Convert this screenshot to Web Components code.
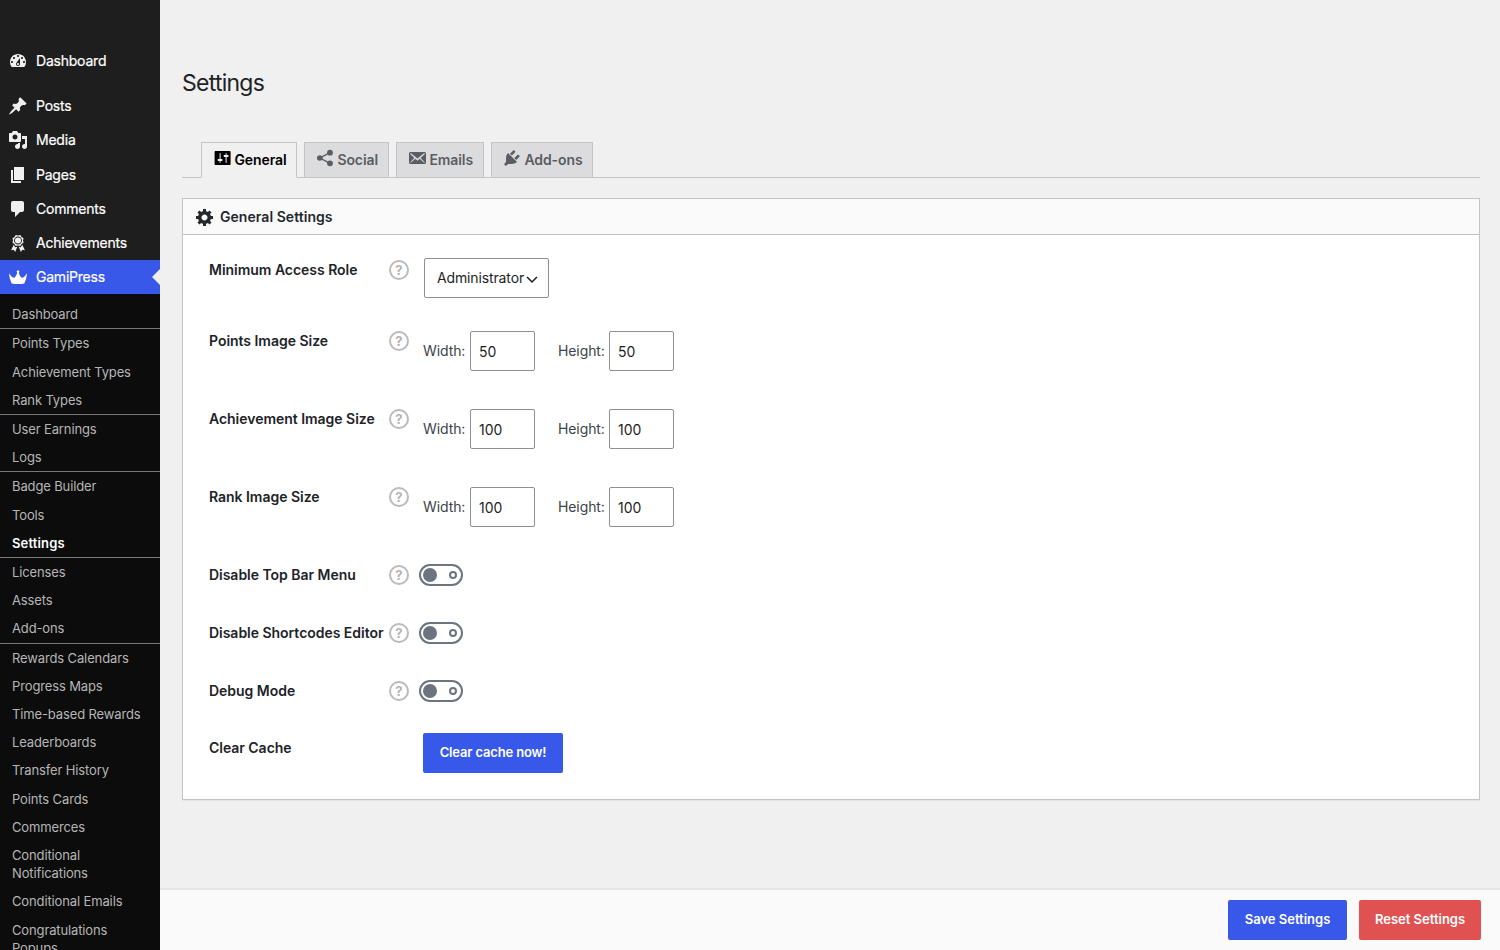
<!DOCTYPE html>
<html lang="en">
<head>
<meta charset="utf-8">
<title>Settings</title>
<style>
  html, body { margin: 0; height: 100%; }
  body {
    background: #f0f0f0;
    color: #3c434a;
    font-family: Inter, "Liberation Sans", sans-serif;
    font-size: 14px;
    line-height: 1.3;
    overflow: hidden;
  }
</style>
</head>
<body>
<settings-app></settings-app>

<script>
const ICONS = {
  dashboard: '<path fill-rule="evenodd" d="M3.76 16h12.48c1.1-1.37 1.76-3.11 1.76-5 0-4.42-3.58-8-8-8s-8 3.58-8 8c0 1.89.66 3.63 1.76 5zM10 4c.55 0 1 .45 1 1s-.45 1-1 1-1-.45-1-1 .45-1 1-1zM6 6c.55 0 1 .45 1 1s-.45 1-1 1-1-.45-1-1 .45-1 1-1zm8 0c.55 0 1 .45 1 1s-.45 1-1 1-1-.45-1-1 .45-1 1-1zm-5.37 5.55L12 7v6c0 1.1-.9 2-2 2s-2-.9-2-2c0-.57.24-1.08.63-1.45zM4 10c.55 0 1 .45 1 1s-.45 1-1 1-1-.45-1-1 .45-1 1-1zm12 0c.55 0 1 .45 1 1s-.45 1-1 1-1-.45-1-1 .45-1 1-1zm-5 3c0-.55-.45-1-1-1s-1 .45-1 1 .45 1 1 1 1-.45 1-1z"/>',
  pin: '<path d="M10.44 3.02l1.82-1.82 6.36 6.35-1.83 1.82c-1.05-.68-2.48-.57-3.41.36l-.75.75c-.92.93-1.04 2.35-.35 3.41l-1.83 1.82-2.41-2.41-2.8 2.79c-.42.42-3.38 2.71-3.8 2.29s1.86-3.39 2.28-3.81l2.79-2.79L4.1 9.36l1.83-1.82c1.05.69 2.48.57 3.4-.36l.75-.75c.93-.92 1.05-2.35.36-3.41z"/>',
  media: '<path fill-rule="evenodd" d="M13 11V4c0-.55-.45-1-1-1h-1.67L9 1H5L3.67 3H2c-.55 0-1 .45-1 1v7c0 .55.45 1 1 1h10c.55 0 1-.45 1-1zM7 4.5c1.38 0 2.5 1.12 2.5 2.5S8.38 9.5 7 9.5 4.5 8.38 4.5 7 5.62 4.5 7 4.5zM14 6h5v10.5c0 1.38-1.12 2.5-2.5 2.5S14 17.88 14 16.5s1.12-2.5 2.5-2.5c.17 0 .34.02.5.05V9h-3V6zm-4 8.05V13h2v3.5c0 1.38-1.12 2.5-2.5 2.5S7 17.88 7 16.5 8.12 14 9.5 14c.17 0 .34.02.5.05z"/>',
  pages: '<path d="M6 15V2h10v13H6zm-1 1h8v2H3V5h2v11z"/>',
  comments: '<path d="M5 2h9c1.1 0 2 .9 2 2v7c0 1.1-.9 2-2 2h-2l-5 5v-5H5c-1.1 0-2-.9-2-2V4c0-1.1.9-2 2-2z"/>',
  award: '<path fill-rule="evenodd" d="M4.46 5.16L5 7.46l-.54 2.29 2.01 1.24L7.7 13l2.3-.54 2.3.54 1.23-2.01 2.01-1.24L15 7.46l.54-2.3-2-1.24-1.24-2.01-2.3.55-2.29-.54-1.25 2zm5.55 6.34c-2.21-.02-3.99-1.81-3.99-4.02 0-2.2 1.78-3.99 3.99-3.99 2.2 0 3.99 1.79 3.99 3.99 0 2.22-1.78 4.02-3.99 4.02z"/><circle cx="10" cy="7.47" r="3.06"/><path d="M5.7 11.8L3.1 17.2l2.6-.5 1.4 2.3 2.2-5.2-2.1.5zM14.3 11.8l2.6 5.4-2.6-.5-1.4 2.3-2.2-5.2 2.1.5z"/>',
  crown: '<path d="M1 6.300c1.300 2.200 3 3.900 5.200 4.700C7.800 9.700 8.700 8 9.200 5.600A1.300 1.300 0 1 1 10.800 5.600C11.300 8 12.200 9.700 13.800 11 16 10.200 17.700 8.500 19 6.300c-.2 3.500-1 6.700-2.700 10.100-4.200.8-8.400.8-12.600 0C2 13 1.200 9.800 1 6.300z"/>',
  sliders: '<path transform="translate(.6 0)" fill-rule="evenodd" d="M18 16V4c0-.55-.45-1-1-1H3c-.55 0-1 .45-1 1v12c0 .55.45 1 1 1h14c.55 0 1-.45 1-1zM8 11h1c.55 0 1 .45 1 1s-.45 1-1 1H8v1.5c0 .28-.22.5-.5.5s-.5-.22-.5-.5V13H6c-.55 0-1-.45-1-1s.45-1 1-1h1V5.500c0-.28.22-.5.5-.5s.5.22.5.5V11zm5-2h-1c-.55 0-1-.45-1-1s.45-1 1-1h1V5.500c0-.28.22-.5.5-.5s.5.22.5.5V7h1c.55 0 1 .45 1 1s-.45 1-1 1h-1v5.500c0 .28-.22.5-.5.5s-.5-.22-.5-.5V9z"/>',
  share: '<path d="M15 4.600L5 10l10 5.400" fill="none" stroke="currentColor" stroke-width="1.400"/><circle cx="15" cy="4.700" r="2.900"/><circle cx="4.800" cy="10" r="2.800"/><circle cx="15" cy="15.300" r="2.900"/>',
  email: '<path fill-rule="evenodd" d="M19 14.500v-9c0-.83-.67-1.500-1.500-1.500H3.490c-.83 0-1.500.67-1.500 1.500v9c0 .83.67 1.500 1.500 1.500H17.500c.83 0 1.500-.67 1.500-1.500zm-1.310-9.110c.33.33.15.67-.03.84L13.600 9.950l3.900 4.060c.12.14.2.36.06.51-.13.16-.43.15-.56.05l-4.370-3.730-2.140 1.950-2.130-1.950-4.370 3.730c-.13.1-.43.11-.56-.05-.14-.15-.06-.37.06-.51l3.900-4.060-4.060-3.720c-.18-.17-.36-.51-.03-.84s.67-.17.95.07l6.240 5.040 6.250-5.040c.28-.24.62-.4.95-.07z"/>',
  plug: '<path d="M13.110 4.360L9.870 7.600 8 5.730l3.240-3.240c.35-.34 1.050-.2 1.560.32.52.51.66 1.210.31 1.550zm-8 1.770l.91-1.120 9.010 9.010-1.190.84c-.71.71-2.630 1.160-3.820 1.160H6.140L4.900 17.260c-.59.59-1.540.59-2.120 0-.59-.58-.59-1.530 0-2.120l1.240-1.240v-3.880c0-1.130.4-3.190 1.090-3.890zm7.260 3.970l3.240-3.240c.34-.35 1.040-.21 1.550.31.52.51.66 1.210.31 1.550l-3.240 3.250z"/>',
  gear: '<path fill-rule="evenodd" d="M18 12h-2.180c-.17.7-.44 1.350-.81 1.930l1.540 1.540-2.100 2.100-1.540-1.540c-.58.36-1.230.63-1.910.79V19H8v-2.180c-.68-.16-1.330-.43-1.910-.79l-1.540 1.540-2.120-2.120 1.540-1.540c-.36-.58-.63-1.230-.79-1.910H1V9.030h2.170c.16-.7.44-1.350.8-1.940L2.430 5.550l2.100-2.100 1.540 1.540c.58-.37 1.240-.64 1.930-.81V2h3v2.180c.68.16 1.330.43 1.910.79l1.540-1.540 2.120 2.120-1.540 1.540c.36.59.64 1.240.8 1.940H18V12zm-8.500 1.500c1.660 0 3-1.340 3-3s-1.340-3-3-3-3 1.340-3 3 1.340 3 3 3z"/>',
  chevron: '<path d="M3.800 7.500l6.200 6.200 6.200-6.200" fill="none" stroke="currentColor" stroke-width="1.900"/>',
};

class DashIcon extends HTMLElement {
  connectedCallback() {
    if (!this.shadowRoot) this.attachShadow({ mode: 'open' });
    this.shadowRoot.innerHTML = `
      <style>
        :host { display: block; flex: none; width: 20px; height: 20px; }
        svg { display: block; width: 100%; height: 100%; fill: currentColor; }
      </style>
      <svg viewBox="0 0 20 20" aria-hidden="true">${ICONS[this.getAttribute('name')] || ''}</svg>
    `;
  }
}

class MenuItem extends HTMLElement {
  connectedCallback() {
    this.attachShadow({ mode: 'open' }).innerHTML = `
      <style>
        :host { display: block; color: #fff; letter-spacing: -0.22px; -webkit-text-stroke: 0.2px; }
        :host([gap]) { margin-bottom: 11px; }
        .item { position: relative; display: flex; align-items: center; height: 34.2px; }
        dash-icon { margin: 0 8px; color: #f0f0f1; }
        :host([current]) .item { background: #3858e9; }
        :host([current]) dash-icon { color: #fff; }
        :host([current]) .item::after {
          content: ""; position: absolute; right: 0; top: 50%; margin-top: -8px;
          border: 8px solid transparent; border-right-color: #f0f0f0; border-left: 0;
        }
      </style>
      <div class="item"><dash-icon name="${this.getAttribute('icon')}"></dash-icon><slot></slot></div>
    `;
  }
}

class SubItem extends HTMLElement {
  connectedCallback() {
    this.attachShadow({ mode: 'open' }).innerHTML = `
      <style>
        :host {
          display: block; padding: 5px 12px;
          font-size: 13px; line-height: 18.2px; color: #b6b6b6;
          letter-spacing: -0.13px;
        }
        :host([divider]) { border-bottom: 1px solid #797979; }
        :host([current]) { color: #fff; font-weight: 600; letter-spacing: 0.15px; }
      </style>
      <slot></slot>
    `;
  }
}

class AdminMenu extends HTMLElement {
  connectedCallback() {
    this.attachShadow({ mode: 'open' }).innerHTML = `
      <style>
        :host { display: block; width: 160px; height: 100%; box-sizing: border-box; padding-top: 44px; background: #1e1e1e; overflow: hidden; }
        .sub { padding: 5.88px 0 8px; background: #0c0c0c; }
      </style>
      <menu-item icon="dashboard" gap>Dashboard</menu-item>
      <menu-item icon="pin">Posts</menu-item>
      <menu-item icon="media">Media</menu-item>
      <menu-item icon="pages">Pages</menu-item>
      <menu-item icon="comments">Comments</menu-item>
      <menu-item icon="award">Achievements</menu-item>
      <menu-item icon="crown" current>GamiPress</menu-item>
      <div class="sub">
        <sub-item divider>Dashboard</sub-item>
        <sub-item>Points Types</sub-item>
        <sub-item>Achievement Types</sub-item>
        <sub-item divider>Rank Types</sub-item>
        <sub-item>User Earnings</sub-item>
        <sub-item divider>Logs</sub-item>
        <sub-item>Badge Builder</sub-item>
        <sub-item>Tools</sub-item>
        <sub-item current divider>Settings</sub-item>
        <sub-item>Licenses</sub-item>
        <sub-item>Assets</sub-item>
        <sub-item divider>Add-ons</sub-item>
        <sub-item>Rewards Calendars</sub-item>
        <sub-item>Progress Maps</sub-item>
        <sub-item>Time-based Rewards</sub-item>
        <sub-item>Leaderboards</sub-item>
        <sub-item>Transfer History</sub-item>
        <sub-item>Points Cards</sub-item>
        <sub-item>Commerces</sub-item>
        <sub-item>Conditional Notifications</sub-item>
        <sub-item>Conditional Emails</sub-item>
        <sub-item>Congratulations Popups</sub-item>
      </div>
    `;
  }
}

class NavTab extends HTMLElement {
  connectedCallback() {
    this.attachShadow({ mode: 'open' }).innerHTML = `
      <style>
        :host {
          display: flex; box-sizing: border-box; height: 36px; padding: 0 0 0 10.4px;
          border: 1px solid #c3c4c7; background: #dcdcde; color: #5a5d62;
          font-size: 14px; font-weight: 600; line-height: 34px; letter-spacing: -0.08px; white-space: nowrap;
        }
        :host([active]) { background: #f0f0f0; border-bottom-color: #f0f0f0; color: #000; }
        dash-icon { margin: 5px 2px 0 0; }
      </style>
      <dash-icon name="${this.getAttribute('icon')}"></dash-icon><slot></slot>
    `;
  }
}

class TabBar extends HTMLElement {
  connectedCallback() {
    this.attachShadow({ mode: 'open' }).innerHTML = `
      <style>
        :host { display: flex; gap: 7px; height: 35px; padding-left: 19px; border-bottom: 1px solid #c3c4c7; }
      </style>
      <slot></slot>
    `;
  }
}

class SettingsPanel extends HTMLElement {
  connectedCallback() {
    this.attachShadow({ mode: 'open' }).innerHTML = `
      <style>
        :host { display: block; border: 1px solid #c3c4c7; background: #fff; box-shadow: 0 1px 1px rgba(0, 0, 0, .04); }
        header {
          display: flex; align-items: center; gap: 5px; height: 35px; padding-left: 12px;
          border-bottom: 1px solid #c3c4c7; background: #fafafa; color: #23282d; font-weight: 600;
          letter-spacing: 0.05px;
        }
        header span { padding-top: 1px; }
      </style>
      <header><dash-icon name="gear"></dash-icon><span>${this.getAttribute('heading')}</span></header>
      <slot></slot>
    `;
  }
}

class HelpTip extends HTMLElement {
  connectedCallback() {
    this.attachShadow({ mode: 'open' }).innerHTML = `
      <style>
        :host {
          display: flex; align-items: center; justify-content: center;
          box-sizing: border-box; width: 20px; height: 20px;
          border: 2px solid #bbb; border-radius: 50%;
          color: #b4b4b4; font-size: 13px; font-weight: 700; line-height: 16px;
        }
      </style>
      <span>?</span>
    `;
  }
}

class SettingRow extends HTMLElement {
  connectedCallback() {
    this.attachShadow({ mode: 'open' }).innerHTML = `
      <style>
        :host { display: flex; box-sizing: border-box; padding-left: 26px; }
        .label {
          width: 180px; padding-top: 25px; line-height: 20px; color: #1d2327;
          font-weight: 600; letter-spacing: -0.03px; white-space: nowrap;
        }
        .tip { width: 34px; padding-top: 25px; }
      </style>
      <div class="label">${this.getAttribute('label')}</div>
      <div class="tip">${this.hasAttribute('help') ? '<help-tip></help-tip>' : ''}</div>
      <slot></slot>
    `;
  }
}

class RoleSelect extends HTMLElement {
  connectedCallback() {
    this.attachShadow({ mode: 'open' }).innerHTML = `
      <style>
        :host {
          display: flex; align-items: center; box-sizing: border-box;
          width: 125px; height: 40px; margin: 23px 0 0 1px; padding-left: 12px;
          border: 1px solid #8c8f94; border-radius: 2px; background: #fff; color: #1e1e1e;
        }
        span { width: 87px; letter-spacing: -0.13px; white-space: nowrap; }
        dash-icon { width: 16px; height: 16px; margin-top: 2px; }
      </style>
      <span><slot></slot></span><dash-icon name="chevron"></dash-icon>
    `;
  }
}

class SizeField extends HTMLElement {
  connectedCallback() {
    const value = this.getAttribute('value');
    this.attachShadow({ mode: 'open' }).innerHTML = `
      <style>
        :host { display: flex; gap: 23px; margin-top: 25px; line-height: 40px; }
        label { display: flex; }
        .name { width: 47px; letter-spacing: -0.1px; }
        .wide .name { width: 51px; }
        .box {
          box-sizing: border-box; width: 65px; height: 40px; padding: 0 8px;
          border: 1px solid #8c8f94; border-radius: 2px; background: #fff; color: #1e1e1e;
        }
      </style>
      <label><span class="name">Width:</span><span class="box">${value}</span></label>
      <label class="wide"><span class="name">Height:</span><span class="box">${value}</span></label>
    `;
  }
}

class ToggleSwitch extends HTMLElement {
  connectedCallback() {
    this.attachShadow({ mode: 'open' }).innerHTML = `
      <style>
        :host {
          display: flex; align-items: center; justify-content: space-between;
          box-sizing: border-box; width: 44px; height: 22px; margin: 24px 0 0 -4px; padding: 0 4px 0 2px;
          border: 2px solid #6c7480; border-radius: 11px;
        }
        .knob { width: 14px; height: 14px; border-radius: 50%; background: #6c7480; }
        .ring { box-sizing: border-box; width: 8px; height: 8px; border: 2px solid #6c7480; border-radius: 50%; }
      </style>
      <span class="knob"></span><span class="ring"></span>
    `;
  }
}

class ActionButton extends HTMLElement {
  connectedCallback() {
    this.attachShadow({ mode: 'open' }).innerHTML = `
      <style>
        :host { display: block; height: 40px; }
        button {
          display: block; width: 100%; height: 40px; padding: 0 0 1px; border: 0; border-radius: 2px;
          background: #3858e9; color: #fff; font: 600 13px/39px Inter, "Liberation Sans", sans-serif;
          letter-spacing: var(--button-spacing, 0); white-space: nowrap;
        }
        :host([danger]) button { background: #e05252; }
      </style>
      <button type="button"><slot></slot></button>
    `;
  }
}

class SettingsApp extends HTMLElement {
  connectedCallback() {
    this.attachShadow({ mode: 'open' }).innerHTML = `
      <style>
        :host { display: flex; height: 100vh; }
        .page { flex: 1; min-width: 0; display: flex; flex-direction: column; }
        main { flex: 1; padding: 68px 20px 0 22px; }
        h1 { margin: 0 0 44px; color: #1d2327; font-size: 23px; font-weight: 400; line-height: 30px; letter-spacing: -0.75px; }
        settings-panel { margin-top: 20px; }
        footer {
          box-sizing: border-box; height: 62px; padding: 10px 19px 0 0;
          display: flex; justify-content: flex-end; gap: 12px;
          border-top: 2px solid #e6e6e6; background: #fafafa;
        }
      </style>
      <admin-menu></admin-menu>
      <div class="page">
        <main>
          <h1>Settings</h1>
          <tab-bar>
            <nav-tab icon="sliders" active style="width:96px">General</nav-tab>
            <nav-tab icon="share" style="width:85px">Social</nav-tab>
            <nav-tab icon="email" style="width:88px">Emails</nav-tab>
            <nav-tab icon="plug" style="width:102px">Add-ons</nav-tab>
          </tab-bar>
          <settings-panel heading="General Settings">
            <setting-row label="Minimum Access Role" help style="height:71px"><role-select>Administrator</role-select></setting-row>
            <setting-row label="Points Image Size" help style="height:78px"><size-field value="50"></size-field></setting-row>
            <setting-row label="Achievement Image Size" help style="height:78px"><size-field value="100"></size-field></setting-row>
            <setting-row label="Rank Image Size" help style="height:78px"><size-field value="100"></size-field></setting-row>
            <setting-row label="Disable Top Bar Menu" help style="height:58px"><toggle-switch></toggle-switch></setting-row>
            <setting-row label="Disable Shortcodes Editor" help style="height:58px"><toggle-switch></toggle-switch></setting-row>
            <setting-row label="Debug Mode" help style="height:57px"><toggle-switch></toggle-switch></setting-row>
            <setting-row label="Clear Cache" style="height:86px"><action-button style="width:140px;margin-top:20px;--button-spacing:-0.15px">Clear cache now!</action-button></setting-row>
          </settings-panel>
        </main>
        <footer>
          <action-button style="width:119px">Save Settings</action-button>
          <action-button danger style="width:122px">Reset Settings</action-button>
        </footer>
      </div>
    `;
  }
}

customElements.define('dash-icon', DashIcon);
customElements.define('menu-item', MenuItem);
customElements.define('sub-item', SubItem);
customElements.define('admin-menu', AdminMenu);
customElements.define('nav-tab', NavTab);
customElements.define('tab-bar', TabBar);
customElements.define('settings-panel', SettingsPanel);
customElements.define('help-tip', HelpTip);
customElements.define('setting-row', SettingRow);
customElements.define('role-select', RoleSelect);
customElements.define('size-field', SizeField);
customElements.define('toggle-switch', ToggleSwitch);
customElements.define('action-button', ActionButton);
customElements.define('settings-app', SettingsApp);
</script>
</body>
</html>
